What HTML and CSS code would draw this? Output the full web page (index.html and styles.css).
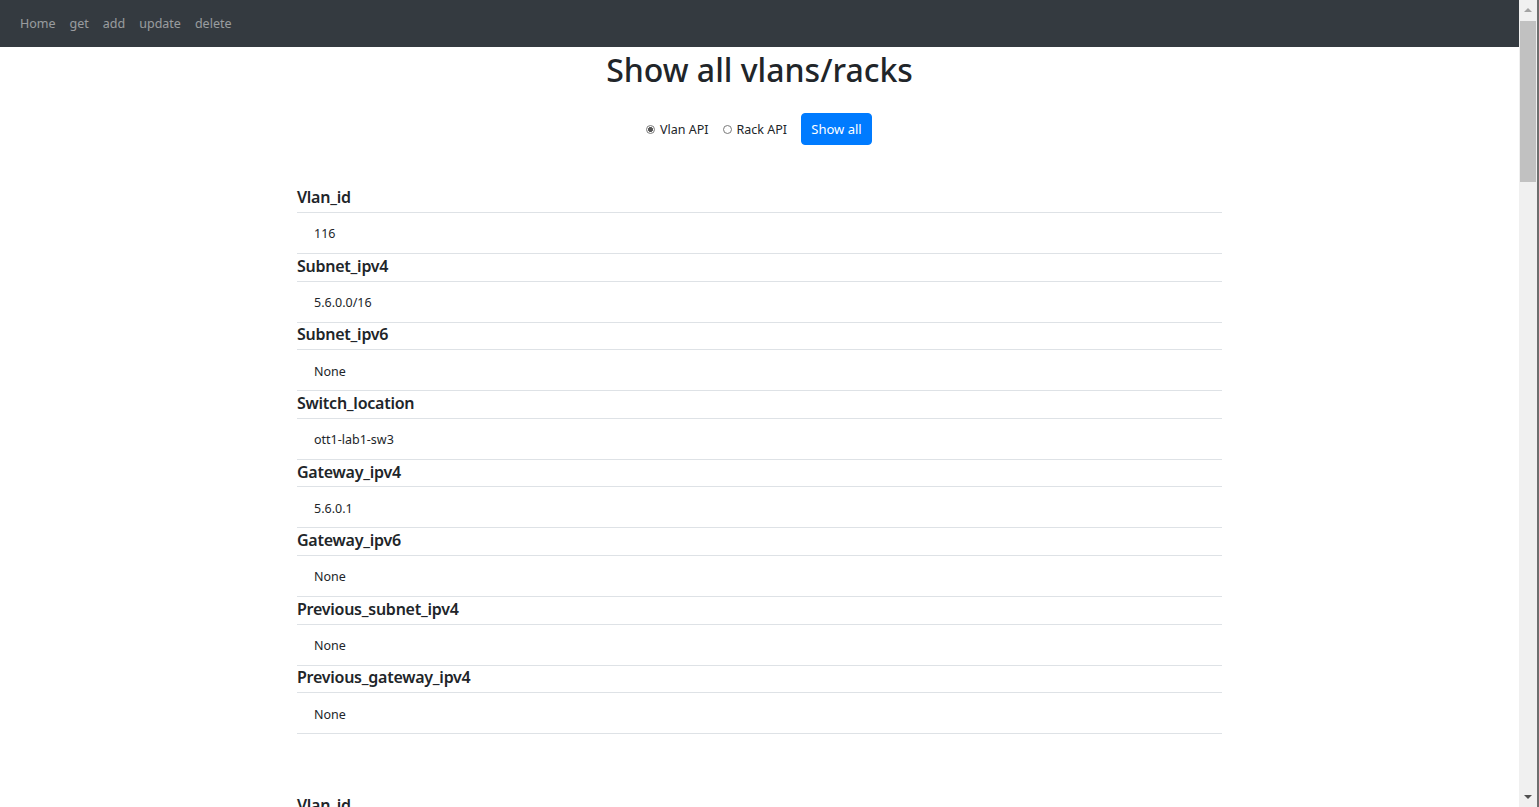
FILE: index.html
```html
<!DOCTYPE html>
<html>
<head>
<meta charset="utf-8">
<title>Show all vlans/racks</title>
<link rel="stylesheet" href="styles.css">
</head>
<body>
<div class="window">
  <div class="viewport">
    <nav class="navbar">
      <a href="#" class="nav-link">Home</a>
      <a href="#" class="nav-link">get</a>
      <a href="#" class="nav-link">add</a>
      <a href="#" class="nav-link">update</a>
      <a href="#" class="nav-link">delete</a>
    </nav>
    <main class="content">
      <h2 class="title">Show all vlans/racks</h2>
      <form class="api-form">
        <label class="radio"><input type="radio" name="api" checked> Vlan API</label>
        <label class="radio"><input type="radio" name="api"> Rack API</label>
        <button type="button" class="btn">Show all</button>
      </form>
      <div class="results">
        <table class="record">
          <tr class="key"><th>Vlan_id</th></tr>
          <tr class="val"><td>116</td></tr>
          <tr class="key"><th>Subnet_ipv4</th></tr>
          <tr class="val"><td>5.6.0.0/16</td></tr>
          <tr class="key"><th>Subnet_ipv6</th></tr>
          <tr class="val"><td>None</td></tr>
          <tr class="key"><th>Switch_location</th></tr>
          <tr class="val"><td>ott1-lab1-sw3</td></tr>
          <tr class="key"><th>Gateway_ipv4</th></tr>
          <tr class="val"><td>5.6.0.1</td></tr>
          <tr class="key"><th>Gateway_ipv6</th></tr>
          <tr class="val"><td>None</td></tr>
          <tr class="key"><th>Previous_subnet_ipv4</th></tr>
          <tr class="val"><td>None</td></tr>
          <tr class="key"><th>Previous_gateway_ipv4</th></tr>
          <tr class="val"><td>None</td></tr>
        </table>
        <table class="record">
          <tr class="key"><th>Vlan_id</th></tr>
          <tr class="val"><td>117</td></tr>
          <tr class="key"><th>Subnet_ipv4</th></tr>
          <tr class="val"><td>5.7.0.0/16</td></tr>
        </table>
      </div>
    </main>
  </div>
  <div class="scrollbar">
    <div class="sb-arrow sb-up"></div>
    <div class="sb-track"><div class="sb-thumb"></div></div>
    <div class="sb-arrow sb-down"></div>
  </div>
</div>
</body>
</html>
```

FILE: styles.css
```css
html, body {
  margin: 0;
  padding: 0;
  height: 100%;
  overflow: hidden;
  background: #fff;
}
body {
  font-family: "Segoe UI", "Noto Sans", "Open Sans", sans-serif;
  color: #212529;
}
.window {
  display: flex;
  height: 807px;
  width: 1539px;
}
.viewport {
  flex: 1;
  min-width: 0;
  overflow: hidden;
}
.navbar {
  height: 47px;
  background: #343a40;
  display: flex;
  align-items: center;
  padding: 0 20px;
  gap: 14px;
}
.nav-link {
  color: rgba(255, 255, 255, 0.5);
  text-decoration: none;
  font-size: 12.5px;
}
.content {
  display: flex;
  flex-direction: column;
  align-items: center;
}
.title {
  font-size: 32px;
  font-weight: 500;
  line-height: 1.2;
  margin: 4px 0 0;
}
.api-form {
  display: flex;
  align-items: center;
  margin: 24px 0 0 -1px;
  font-size: 12.5px;
}
.radio {
  display: flex;
  align-items: center;
  margin-right: 14px;
}
.radio input {
  -webkit-appearance: none;
  appearance: none;
  margin: 0 5px 0 0;
  width: 9px;
  height: 9px;
  border: 1px solid #7a7a7a;
  border-radius: 50%;
  background: #fff;
  box-sizing: border-box;
}
.radio input:checked {
  background: radial-gradient(circle, #555 0, #555 2.2px, #fff 2.6px);
}
.btn {
  font-family: inherit;
  font-size: 13px;
  color: #fff;
  background: #007bff;
  border: 1px solid #007bff;
  border-radius: 4px;
  width: 71px;
  height: 32px;
  padding: 0;
}
.results {
  width: 925px;
  margin-top: 40px;
  display: flex;
  flex-direction: column;
  gap: 59px;
}
.record {
  width: 100%;
  border-collapse: collapse;
}
.record th {
  text-align: left;
  font-size: 16px;
  font-weight: 600;
  letter-spacing: -0.25px;
  height: 23.6px;
  padding: 0 0 3px;
  vertical-align: middle;
  border-bottom: 1px solid #dee2e6;
}
.record td {
  font-size: 12.5px;
  height: 38px;
  padding: 2px 0 0 17px;
  border-bottom: 1px solid #dee2e6;
}
.scrollbar {
  width: 18px;
  height: 807px;
  background: #f0f0f0;
  border-right: 2px solid #6e6e6e;
  display: flex;
  flex-direction: column;
  align-items: center;
}
.sb-arrow {
  width: 0;
  height: 0;
  border-left: 4px solid transparent;
  border-right: 4px solid transparent;
}
.sb-up {
  border-bottom: 4px solid #a3a3a3;
  margin: 8px 0 8px;
}
.sb-down {
  border-top: 4px solid #505050;
  margin: 0 0 8px;
}
.sb-track {
  flex: 1;
  width: 100%;
  display: flex;
  justify-content: center;
}
.sb-thumb {
  width: 16px;
  height: 161px;
  margin-top: 1px;
  background: #c1c1c1;
}
```
